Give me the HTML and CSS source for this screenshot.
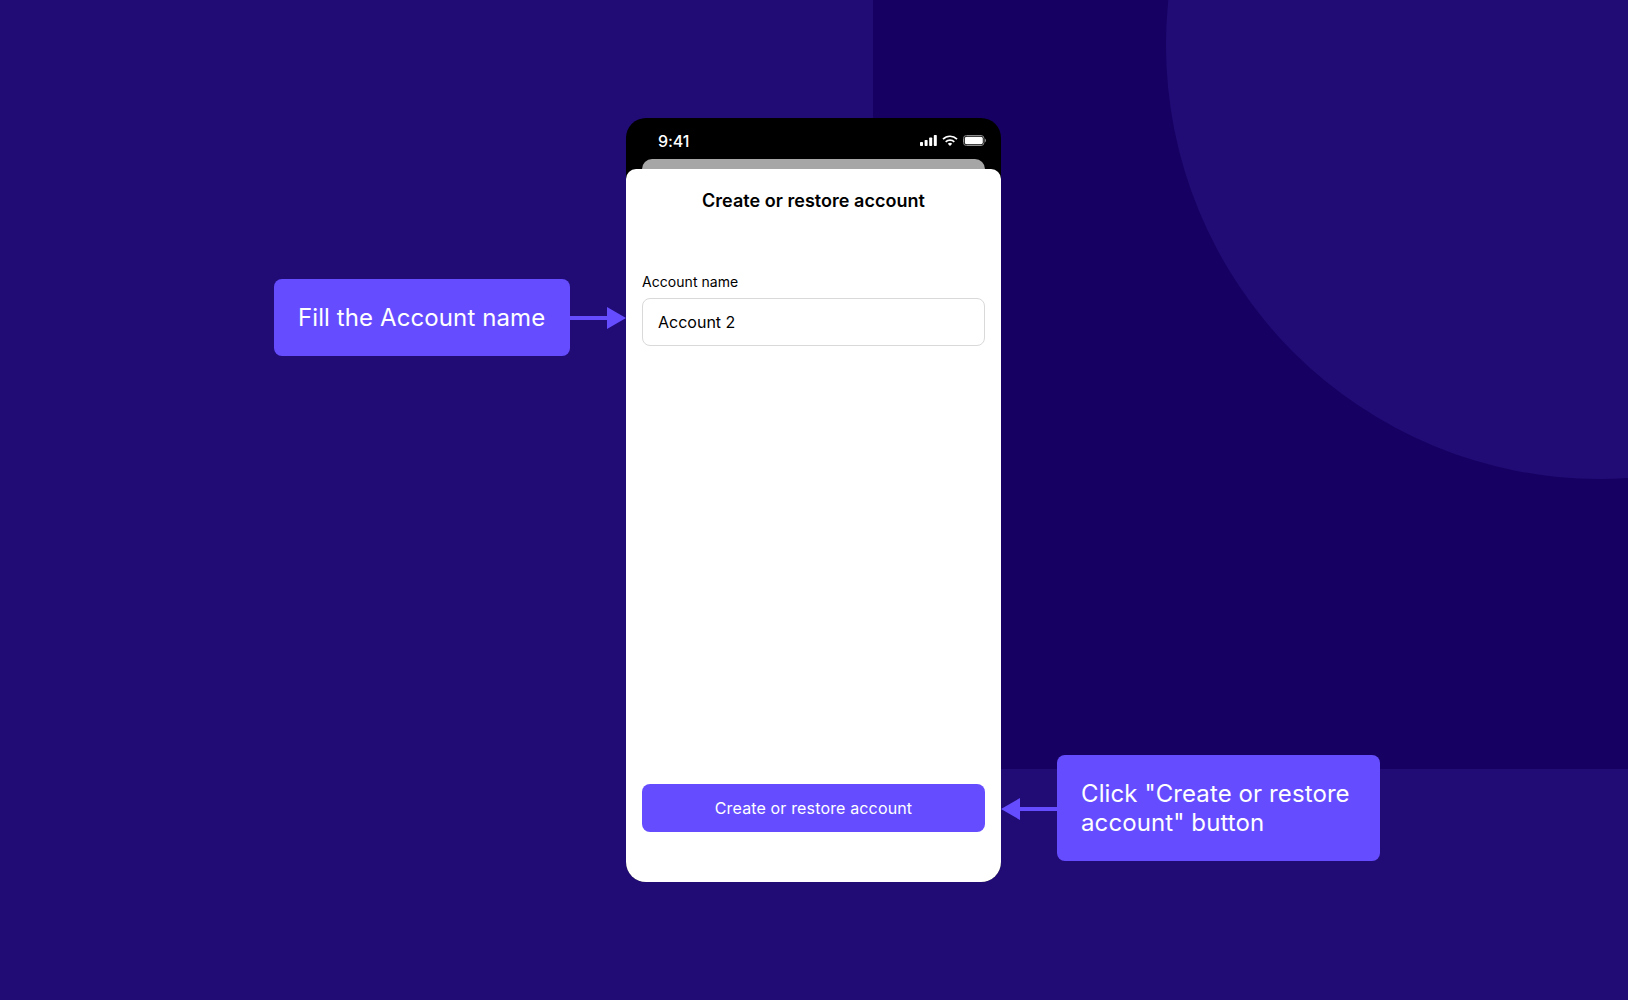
FILE: index.html
```html
<!DOCTYPE html>
<html lang="en">
<head>
    <meta charset="UTF-8">
    <meta name="viewport" content="width=device-width, initial-scale=1.0">
    <title>Create or restore account</title>
    <link rel="stylesheet" href="styles.css">
</head>
<body>
    <div class="stage">
        <div class="bg-panel"></div>
        <div class="bg-circle"></div>

        <div class="layout">
            <div class="step step-left">
                <div class="callout callout-short">Fill the Account name</div>
                <svg class="arrow" width="56" height="22" viewBox="0 0 56 22">
                    <path d="M0 9h37V0l19 11-19 11v-9H0z" fill="#654dff"/>
                </svg>
            </div>

            <div class="phone">
                <div class="status-bar">
                    <span class="status-time">9:41</span>
                    <div class="status-icons">
                        <svg width="17" height="11" viewBox="0 0 17 11">
                            <rect x="0" y="7" width="3" height="4" rx="0.7" fill="#fff"/>
                            <rect x="4.6" y="5" width="3" height="6" rx="0.7" fill="#fff"/>
                            <rect x="9.2" y="2.5" width="3" height="8.5" rx="0.7" fill="#fff"/>
                            <rect x="13.8" y="0" width="3" height="11" rx="0.7" fill="#fff"/>
                        </svg>
                        <svg width="16" height="11" viewBox="0 0 16 11">
                            <path d="M1 4.1A10 10 0 0 1 15 4.1" fill="none" stroke="#fff" stroke-width="1.7"/>
                            <path d="M3.7 6.8A6.2 6.2 0 0 1 12.3 6.8" fill="none" stroke="#fff" stroke-width="1.7"/>
                            <path d="M8 11 5.8 8.8a3.1 3.1 0 0 1 4.4 0z" fill="#fff"/>
                        </svg>
                        <svg width="23" height="11" viewBox="0 0 23 11">
                            <rect x="0.5" y="0.5" width="20.5" height="10" rx="3" fill="none" stroke="#8c8c8c"/>
                            <rect x="1.8" y="1.8" width="18" height="7.4" rx="1.7" fill="#fff"/>
                            <path d="M22 3.8c.6.2 1 .9 1 1.7s-.4 1.5-1 1.7z" fill="#8c8c8c"/>
                        </svg>
                    </div>
                </div>
                <div class="sheet-behind"></div>
                <div class="sheet">
                    <h1 class="sheet-title">Create or restore account</h1>
                    <label class="field-label" for="account-name">Account name</label>
                    <input class="field-input" id="account-name" type="text" value="Account 2">
                    <button class="btn-primary">Create or restore account</button>
                </div>
            </div>

            <div class="step step-right">
                <svg class="arrow arrow-low" width="56" height="22" viewBox="0 0 56 22">
                    <path d="M56 9H19V0L0 11l19 11v-9h37z" fill="#654dff"/>
                </svg>
                <div class="callout callout-wide">Click "Create or restore account" button</div>
            </div>
        </div>
    </div>
</body>
</html>
```

FILE: styles.css
```css
* {
    box-sizing: border-box;
}
html, body {
    margin: 0;
    padding: 0;
}
body {
    font-family: Inter, "Liberation Sans", sans-serif;
    background-color: #210c76;
}
.stage {
    position: relative;
    height: 1000px;
    overflow: hidden;
    background-color: #210c76;
}
.bg-panel {
    position: absolute;
    left: 873px;
    top: 0;
    right: 0;
    height: 769px;
    background-color: #160061;
}
.bg-circle {
    position: absolute;
    left: 1166px;
    top: -389px;
    width: 868px;
    height: 868px;
    border-radius: 50%;
    background-color: #210c76;
}
.layout {
    position: relative;
    display: flex;
    align-items: flex-start;
    padding: 118px 0 0 274px;
}
.step {
    display: flex;
    align-items: center;
}
.step-left {
    margin-top: 161px;
}
.step-right {
    margin-top: 637px;
}
.callout {
    background-color: #654dff;
    color: #fff;
    font-size: 24px;
    line-height: 29px;
    letter-spacing: 0.1px;
    border-radius: 8px;
    padding: 24px;
}
.callout-short {
    width: 296px;
    white-space: nowrap;
}
.callout-wide {
    width: 323px;
}
.arrow {
    display: block;
    flex-shrink: 0;
}
.arrow-low {
    margin-top: 2px;
}
.phone {
    width: 375px;
    height: 764px;
    display: flex;
    flex-direction: column;
    background-color: #000;
    border-radius: 20px;
}
.status-bar {
    height: 41px;
    flex-shrink: 0;
    display: flex;
    align-items: flex-end;
    justify-content: space-between;
    padding: 0 15px 8px 32px;
    color: #fff;
}
.status-time {
    font-size: 16px;
    line-height: 20px;
    font-weight: 500;
    letter-spacing: -0.1px;
}
.status-icons {
    display: flex;
    align-items: center;
    gap: 5px;
    padding-bottom: 5px;
}
.status-icons svg {
    display: block;
}
.sheet-behind {
    height: 16px;
    flex-shrink: 0;
    margin: 0 16px -6px;
    background-color: #a6a6a6;
    border-radius: 10px 10px 0 0;
}
.sheet {
    flex: 1;
    position: relative;
    display: flex;
    flex-direction: column;
    background-color: #fff;
    border-radius: 10px 10px 20px 20px;
    padding: 0 16px 50px;
}
.sheet-title {
    margin: 21px 0 0;
    font-size: 18px;
    line-height: 22px;
    font-weight: 600;
    letter-spacing: 0.03px;
    text-align: center;
    color: #000;
}
.field-label {
    margin-top: 61px;
    font-size: 14px;
    line-height: 17px;
    letter-spacing: 0.05px;
    color: #000;
}
.field-input {
    margin-top: 8px;
    height: 48px;
    width: 100%;
    padding: 0 15px;
    border: 1px solid #d9d9d9;
    border-radius: 8px;
    font-family: inherit;
    font-size: 16px;
    color: #000;
    background-color: #fff;
}
.btn-primary {
    margin-top: auto;
    height: 48px;
    border: none;
    border-radius: 8px;
    background-color: #654dff;
    color: #fff;
    font-family: inherit;
    font-size: 16px;
    font-weight: 400;
    letter-spacing: 0.15px;
}
```
